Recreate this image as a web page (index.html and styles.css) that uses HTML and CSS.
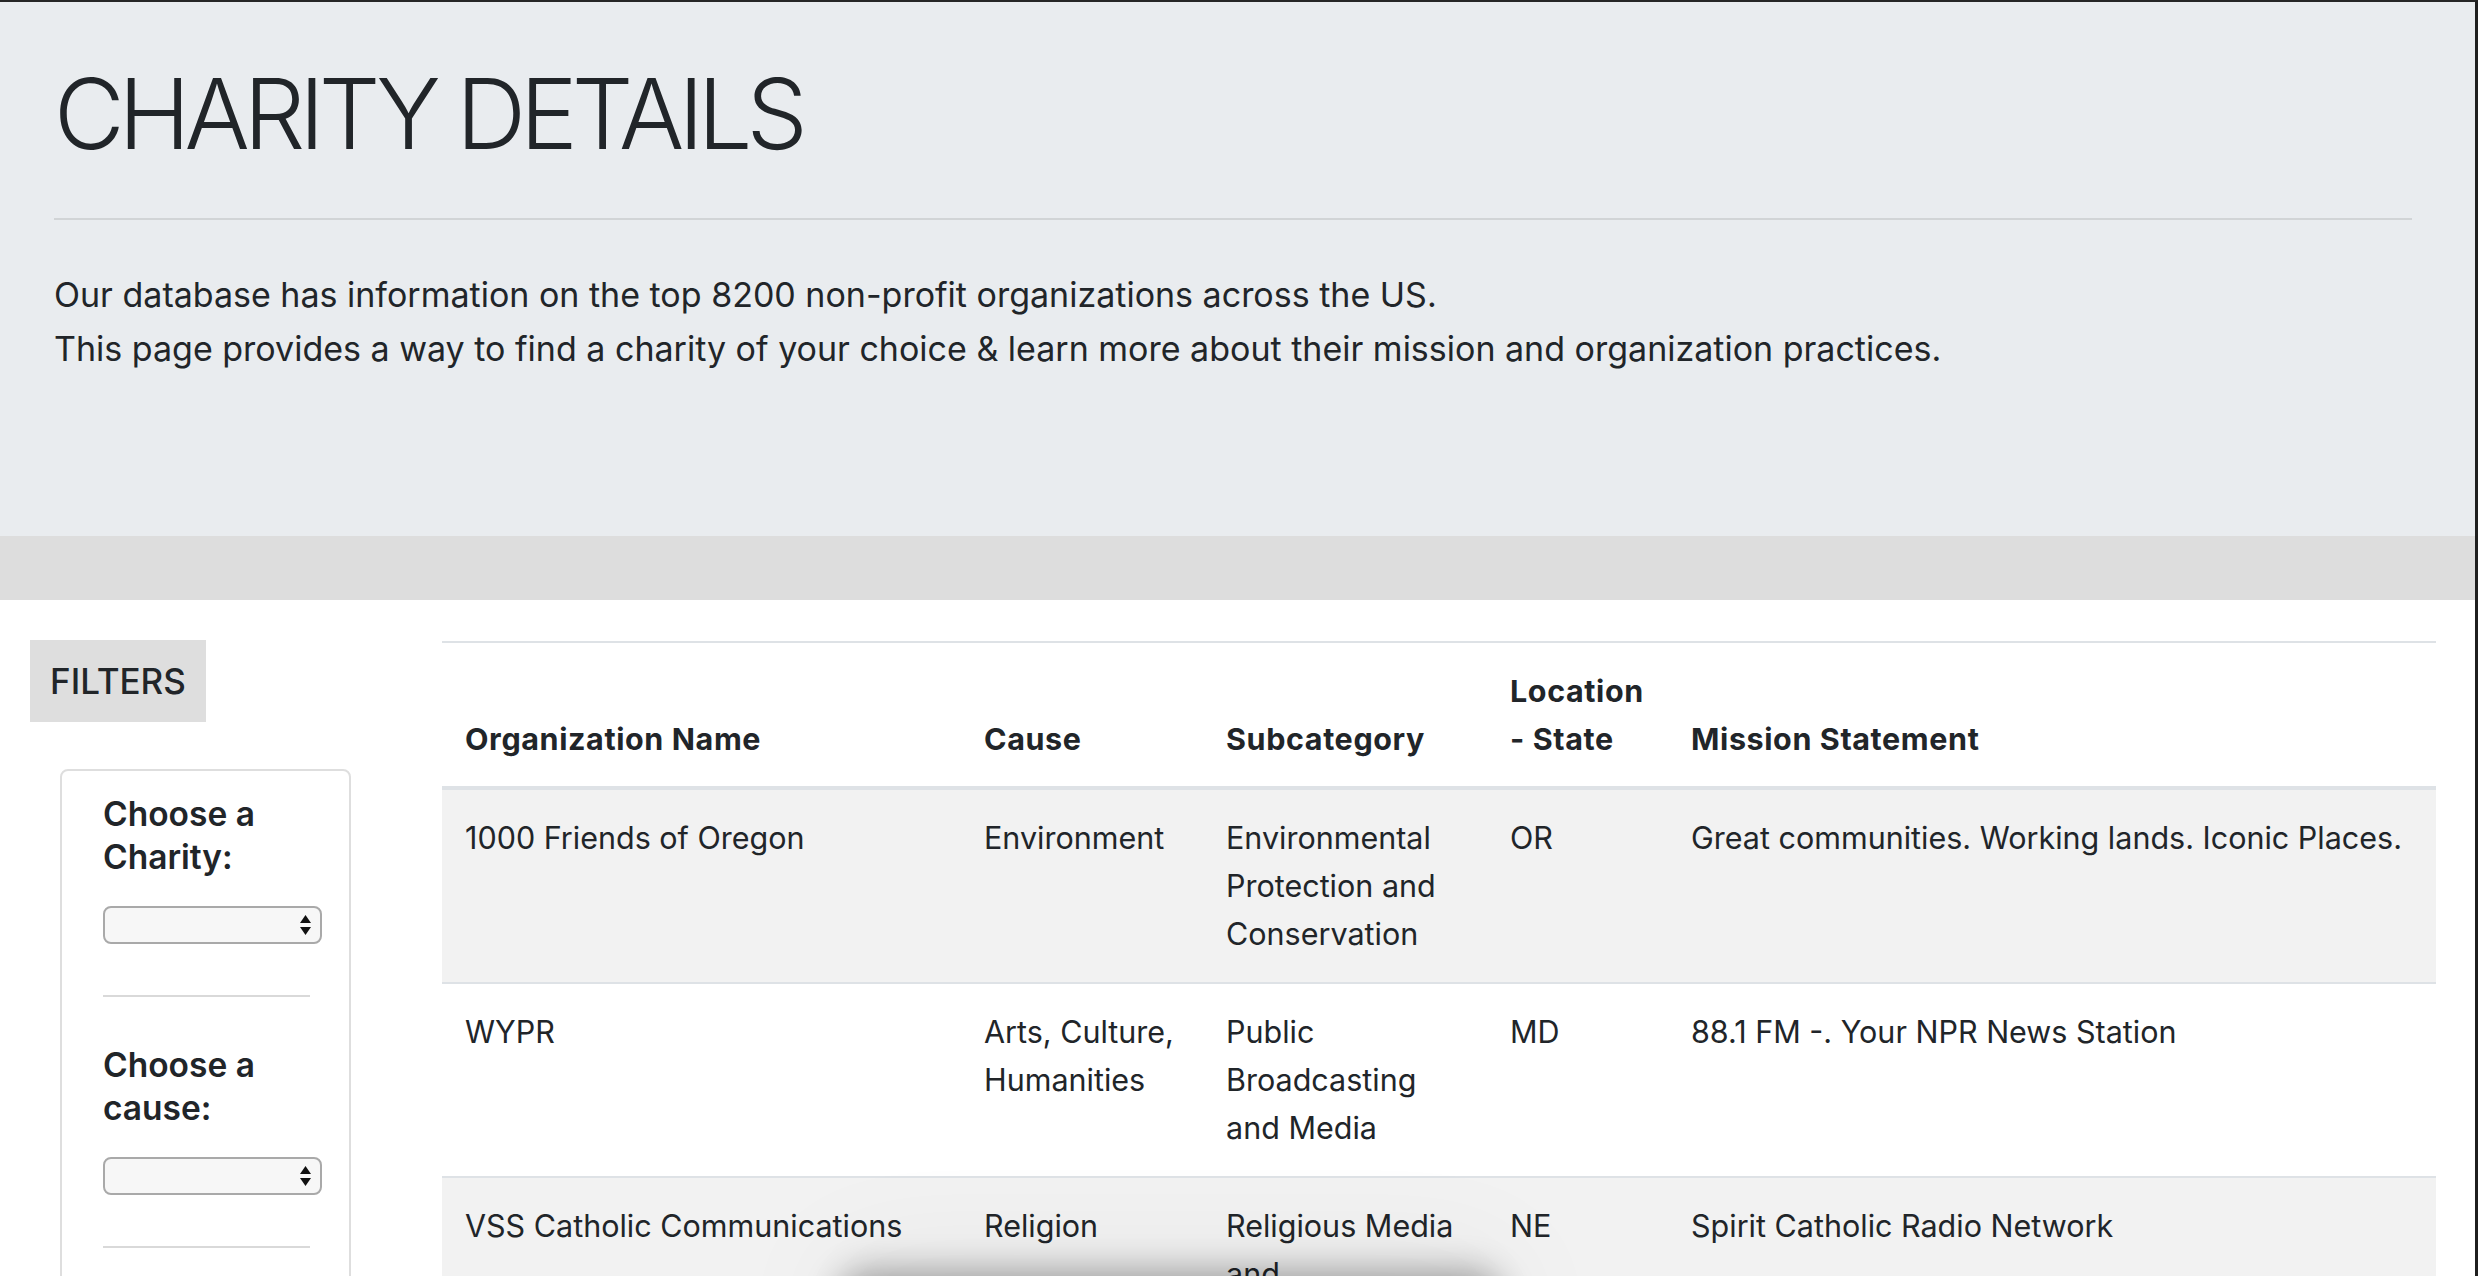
FILE: index.html
```html
<!DOCTYPE html>
<html lang="en">
<head>
<meta charset="utf-8">
<title>Charity Details</title>
<link rel="stylesheet" href="styles.css">
</head>
<body>
<div class="window">
  <header class="jumbotron">
    <h1 class="title">CHARITY DETAILS</h1>
    <hr class="divider">
    <p class="lead">Our database has information on the top 8200 non-profit organizations across the US.<br>This page provides a way to find a charity of your choice &amp; learn more about their mission and organization practices.</p>
  </header>
  <div class="band"></div>
  <main class="content">
    <aside class="sidebar">
      <div class="filters-tag">FILTERS</div>
      <div class="filter-card">
        <h5 class="filter-title">Choose a Charity:</h5>
        <div class="select-box">
          <svg class="select-arrows" width="11" height="20" viewBox="0 0 11 20"><path d="M5.5 0 L11 8 L0 8 Z M0 12 L11 12 L5.5 20 Z" fill="#111"/></svg>
        </div>
        <hr class="filter-rule">
        <h5 class="filter-title">Choose a cause:</h5>
        <div class="select-box">
          <svg class="select-arrows" width="11" height="20" viewBox="0 0 11 20"><path d="M5.5 0 L11 8 L0 8 Z M0 12 L11 12 L5.5 20 Z" fill="#111"/></svg>
        </div>
        <hr class="filter-rule">
        <h5 class="filter-title">Choose a state:</h5>
        <div class="select-box">
          <svg class="select-arrows" width="11" height="20" viewBox="0 0 11 20"><path d="M5.5 0 L11 8 L0 8 Z M0 12 L11 12 L5.5 20 Z" fill="#111"/></svg>
        </div>
      </div>
    </aside>
    <section class="table-wrap">
      <table class="charity-table">
        <colgroup>
          <col class="col-name"><col class="col-cause"><col class="col-sub"><col class="col-loc"><col class="col-mission">
        </colgroup>
        <thead>
          <tr>
            <th>Organization Name</th>
            <th>Cause</th>
            <th>Subcategory</th>
            <th>Location - State</th>
            <th>Mission Statement</th>
          </tr>
        </thead>
        <tbody>
          <tr>
            <td>1000 Friends of Oregon</td>
            <td>Environment</td>
            <td>Environmental Protection and Conservation</td>
            <td>OR</td>
            <td>Great communities. Working lands. Iconic Places.</td>
          </tr>
          <tr>
            <td>WYPR</td>
            <td>Arts, Culture, Humanities</td>
            <td>Public Broadcasting and Media</td>
            <td>MD</td>
            <td>88.1 FM -. Your NPR News Station</td>
          </tr>
          <tr>
            <td>VSS Catholic Communications</td>
            <td>Religion</td>
            <td>Religious Media and Broadcasting</td>
            <td>NE</td>
            <td>Spirit Catholic Radio Network</td>
          </tr>
        </tbody>
      </table>
    </section>
  </main>
  <div class="dock-shadow"></div>
</div>
</body>
</html>
```
FILE: styles.css
```css
html, body {
  margin: 0;
  padding: 0;
  background: #ffffff;
}

body {
  font-family: Inter, "Noto Sans", "Liberation Sans", sans-serif;
  color: #212529;
}

.window {
  position: relative;
  height: 1276px;
  box-sizing: border-box;
  border-top: 2px solid #262626;
  border-right: 3px solid #1f1f1f;
  overflow: hidden;
  background: #ffffff;
}

/* ---------- header ---------- */
.jumbotron {
  background: #e9ecef;
  height: 534px;
  box-sizing: border-box;
  padding: 54px 63px 0 54px;
}

.title {
  margin: 0;
  font-size: 97px;
  font-weight: 300;
  line-height: 116px;
  letter-spacing: -6px;
  color: #212529;
}

.divider {
  margin: 46px 0 0;
  border: 0;
  border-top: 2px solid rgba(0, 0, 0, 0.1);
  height: 0;
}

.lead {
  margin: 48px 0 0;
  font-size: 34px;
  line-height: 54px;
  font-weight: 400;
}

.band {
  height: 64px;
  background: #dddddd;
}

/* ---------- content ---------- */
.content {
  display: flex;
  align-items: flex-start;
}

.sidebar {
  flex: 0 0 442px;
  box-sizing: border-box;
  padding: 40px 0 0 30px;
}

.filters-tag {
  width: 176px;
  height: 82px;
  box-sizing: border-box;
  padding-left: 20px;
  background: #dedede;
  font-size: 35px;
  font-weight: 500;
  line-height: 82px;
}

.filter-card {
  margin: 47px 0 0 30px;
  width: 291px;
  box-sizing: border-box;
  border: 2px solid #dedede;
  border-radius: 8px;
  padding: 22px 0 40px 41px;
}

.filter-title {
  margin: 0;
  width: 219px;
  font-size: 33.5px;
  font-weight: 600;
  line-height: 43px;
}

.select-box {
  margin-top: 27px;
  width: 219px;
  height: 38px;
  box-sizing: border-box;
  border: 2px solid #a9a9a9;
  border-radius: 8px;
  background: #f7f7f7;
  display: flex;
  align-items: center;
  justify-content: flex-end;
  padding-right: 9px;
}

.select-arrows {
  display: block;
}

.filter-rule {
  margin: 51px 0 47px;
  width: 207px;
  height: 0;
  border: 0;
  border-top: 2px solid #d9d9d9;
}

.table-wrap {
  flex: 1;
  padding: 41px 39px 0 0;
  min-width: 0;
}

.charity-table {
  width: 100%;
  table-layout: fixed;
  border-collapse: separate;
  border-spacing: 0;
  border-top: 2px solid #dee2e6;
  font-size: 30.5px;
}

.col-name { width: 519px; }
.col-cause { width: 242px; }
.col-sub { width: 284px; }
.col-loc { width: 181px; }
.col-mission { width: 768px; }

.charity-table th {
  text-align: left;
  vertical-align: bottom;
  padding: 24px 23px;
  line-height: 47.5px;
  font-weight: 700;
  letter-spacing: 0.6px;
  border-bottom: 4px solid #dee2e6;
}

.charity-table td {
  vertical-align: top;
  padding: 24px 23px;
  line-height: 48px;
  border-bottom: 2px solid #dee2e6;
}

.charity-table tbody tr:nth-child(odd) td {
  background: #f2f2f2;
}

/* shadow of an element floating just below the window */
.dock-shadow {
  position: absolute;
  left: 850px;
  width: 640px;
  bottom: -48px;
  height: 40px;
  border-radius: 20px;
  box-shadow: 0 0 34px 14px rgba(0, 0, 0, 0.32), 0 0 120px 30px rgba(0, 0, 0, 0.05);
}
```
